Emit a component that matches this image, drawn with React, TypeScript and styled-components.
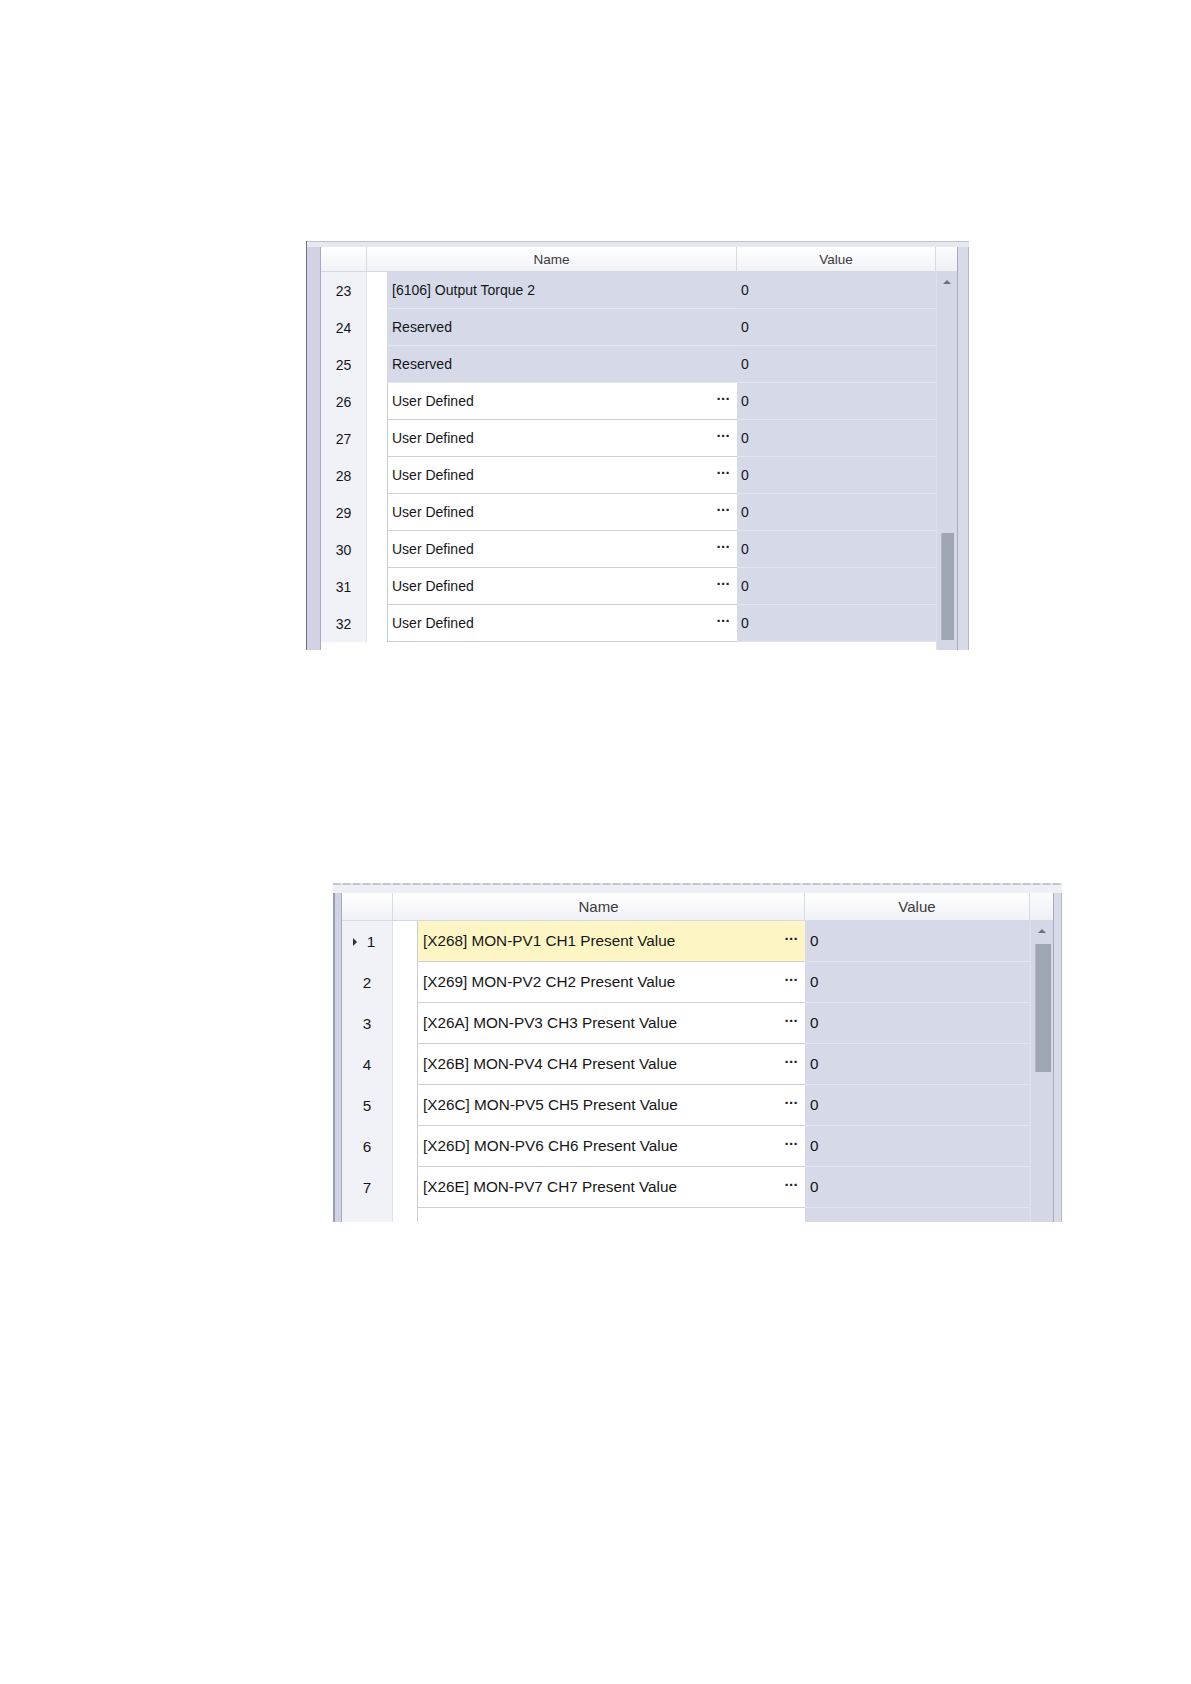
import styled, { createGlobalStyle } from 'styled-components';

type Dims = {
  width: number;
  height: number;
  topBar: number;
  edgeL: number;
  edgeR: number;
  rn: number;
  ind: number;
  name: number;
  value: number;
  scroll: number;
  header: number;
  row: number;
  font: number;
  hfont: number;
  namePad: number;
  valuePad: number;
  thumbTop: number;
  thumbH: number;
  thumbW: number;
  dashed: boolean;
};

type Tone = 'lavender' | 'white' | 'yellow';

interface RowData {
  no?: number;
  name: string;
  value: string;
  tone: Tone;
  editable: boolean;
  current?: boolean;
}

const GlobalStyle = createGlobalStyle`
  html, body {
    margin: 0;
    padding: 0;
    background: #fff;
  }
  body {
    font-family: "Liberation Sans", Arial, sans-serif;
    color: #161616;
  }
`;

const Page = styled.div`
  display: flex;
  flex-direction: column;
  align-items: flex-start;
  padding-top: 241px;
  min-height: 1684px;
  box-sizing: border-box;
`;

const PanelSlot = styled.div<{ $left: number; $top: number }>`
  margin-left: ${(p) => p.$left}px;
  margin-top: ${(p) => p.$top}px;
`;

const Frame = styled.div<{ $d: Dims }>`
  width: ${(p) => p.$d.width}px;
  height: ${(p) => p.$d.height}px;
  display: flex;
  flex-direction: column;
  overflow: hidden;
  background: #fff;
`;

const TopBar = styled.div<{ $d: Dims }>`
  height: ${(p) => p.$d.topBar}px;
  flex: none;
  box-sizing: border-box;
  background: ${(p) =>
    p.$d.dashed
      ? 'linear-gradient(#fff 0 1px, transparent 1px 3px, #eef0f6 3px), repeating-linear-gradient(90deg, #c3c5d0 0 7px, #dfe0e8 7px 10px)'
      : 'linear-gradient(#bfc2cf 0 1px, #e6e7ef 1px)'};
  ${(p) => (p.$d.dashed ? '' : 'border-left: 1px solid #6c6f82;')}
`;

const Body = styled.div`
  flex: 1;
  display: flex;
  min-height: 0;
`;

const LeftEdge = styled.div<{ $d: Dims }>`
  width: ${(p) => p.$d.edgeL}px;
  flex: none;
  box-sizing: border-box;
  background: #d1d3e4;
  border-left: ${(p) => (p.$d.dashed ? '2px solid #9a9db2' : '1px solid #6c6f82')};
  border-right: 1px solid #a7aabd;
`;

const RightEdge = styled.div<{ $d: Dims }>`
  width: ${(p) => p.$d.edgeR}px;
  flex: none;
  box-sizing: border-box;
  background: #d8dae8;
  border-left: 1px solid #a8abbd;
  box-shadow: inset -${(p) => Math.round(p.$d.edgeR / 2)}px 0 0 -${(p) =>
      Math.round(p.$d.edgeR / 2) - 1}px #b3b5c8;
`;

const Grid = styled.div<{ $d: Dims }>`
  width: ${(p) => p.$d.rn + p.$d.ind + p.$d.name + p.$d.value}px;
  flex: none;
  display: flex;
  flex-direction: column;
  background: #fff;
`;

const HeaderRow = styled.div<{ $d: Dims }>`
  height: ${(p) => p.$d.header}px;
  flex: none;
  display: grid;
  grid-template-columns: ${(p) => `${p.$d.rn}px ${p.$d.ind + p.$d.name}px ${p.$d.value}px`};
  background: linear-gradient(#ffffff, #f1f2f7);
  border-bottom: 1px solid #d6d8e2;
  box-sizing: border-box;
`;

const HeaderCell = styled.div<{ $d: Dims }>`
  display: flex;
  align-items: center;
  justify-content: center;
  border-right: 1px solid #d8dae3;
  font-size: ${(p) => p.$d.hfont}px;
  color: #3a3a3a;
`;

const Row = styled.div<{ $d: Dims }>`
  height: ${(p) => p.$d.row}px;
  flex: none;
  display: grid;
  grid-template-columns: ${(p) =>
    `${p.$d.rn}px ${p.$d.ind}px ${p.$d.name}px ${p.$d.value}px`};
`;

const RowNum = styled.div<{ $d: Dims; $current?: boolean }>`
  position: relative;
  display: flex;
  align-items: center;
  justify-content: center;
  padding-left: ${(p) => (p.$current ? 8 : 0)}px;
  background: #f1f2f8;
  border-right: 1px solid #e0e2ea;
  font-size: ${(p) => p.$d.font}px;
`;

const Pointer = styled.span`
  position: absolute;
  left: 11px;
  top: 50%;
  margin-top: -4px;
  width: 0;
  height: 0;
  border-top: 4px solid transparent;
  border-bottom: 4px solid transparent;
  border-left: 4px solid #333;
`;

const Indent = styled.div`
  background: #fff;
`;

const toneBg: Record<Tone, string> = {
  lavender: '#d5d9e8',
  white: '#ffffff',
  yellow: '#fdf6c4',
};

const NameCell = styled.div<{ $d: Dims; $tone: Tone }>`
  display: flex;
  align-items: center;
  justify-content: space-between;
  padding: 0 7px 0 ${(p) => p.$d.namePad}px;
  box-sizing: border-box;
  background: ${(p) => toneBg[p.$tone]};
  border-left: 1px solid ${(p) => (p.$tone === 'lavender' ? '#d5d9e8' : '#c9cbd3')};
  border-bottom: 1px solid ${(p) => (p.$tone === 'lavender' ? '#e4e6ef' : '#cfd0d6')};
  font-size: ${(p) => p.$d.font}px;
  white-space: nowrap;
`;

const Ellipsis = styled.span`
  font-size: 15px;
  font-weight: bold;
  letter-spacing: -0.5px;
  color: #222;
  margin-top: -5px;
`;

const ValueCell = styled.div<{ $d: Dims }>`
  display: flex;
  align-items: center;
  padding-left: ${(p) => p.$d.valuePad}px;
  background: #d5d9e8;
  border-bottom: 1px solid #e3e5ee;
  font-size: ${(p) => p.$d.font}px;
`;

const ScrollCol = styled.div<{ $d: Dims }>`
  width: ${(p) => p.$d.scroll}px;
  flex: none;
  display: flex;
  flex-direction: column;
`;

const ScrollHead = styled.div<{ $d: Dims }>`
  height: ${(p) => p.$d.header}px;
  flex: none;
  background: linear-gradient(#fbfbfd, #eef0f6);
  border-bottom: 1px solid #d6d8e2;
  box-sizing: border-box;
`;

const ScrollTrack = styled.div`
  position: relative;
  flex: 1;
  background: #d4d8e6;
  border-left: 1px solid #dfe1ea;
`;

const ArrowUp = styled.span`
  position: absolute;
  left: 50%;
  top: 8px;
  margin-left: -4px;
  width: 0;
  height: 0;
  border-left: 4px solid transparent;
  border-right: 4px solid transparent;
  border-bottom: 4px solid #6e7180;
`;

const Thumb = styled.span<{ $d: Dims }>`
  position: absolute;
  left: 4px;
  top: ${(p) => p.$d.thumbTop}px;
  width: ${(p) => p.$d.thumbW}px;
  height: ${(p) => p.$d.thumbH}px;
  background: #a0a5b4;
  border-left: 1px solid #b4b8c5;
`;

const GridPanel = ({ d, rows }: { d: Dims; rows: RowData[] }) => (
  <Frame $d={d}>
    <TopBar $d={d} />
    <Body>
      <LeftEdge $d={d} />
      <Grid $d={d}>
        <HeaderRow $d={d}>
          <HeaderCell $d={d} />
          <HeaderCell $d={d}>Name</HeaderCell>
          <HeaderCell $d={d}>Value</HeaderCell>
        </HeaderRow>
        {rows.map((row, i) => (
          <Row $d={d} key={i}>
            <RowNum $d={d} $current={row.current}>
              {row.current && <Pointer />}
              {row.no}
            </RowNum>
            <Indent />
            <NameCell $d={d} $tone={row.tone}>
              <span>{row.name}</span>
              {row.editable && <Ellipsis>···</Ellipsis>}
            </NameCell>
            <ValueCell $d={d}>{row.value}</ValueCell>
          </Row>
        ))}
      </Grid>
      <ScrollCol $d={d}>
        <ScrollHead $d={d} />
        <ScrollTrack>
          <ArrowUp />
          <Thumb $d={d} />
        </ScrollTrack>
      </ScrollCol>
      <RightEdge $d={d} />
    </Body>
  </Frame>
);

const firstDims: Dims = {
  width: 663,
  height: 409,
  topBar: 6,
  edgeL: 15,
  edgeR: 12,
  rn: 46,
  ind: 20,
  name: 350,
  value: 199,
  scroll: 21,
  header: 25,
  row: 37,
  font: 14,
  hfont: 13.5,
  namePad: 4,
  valuePad: 4,
  thumbTop: 261,
  thumbH: 107,
  thumbW: 12,
  dashed: false,
};

const secondDims: Dims = {
  width: 729,
  height: 340,
  topBar: 11,
  edgeL: 9,
  edgeR: 9,
  rn: 51,
  ind: 24,
  name: 388,
  value: 225,
  scroll: 23,
  header: 28,
  row: 41,
  font: 15.3,
  hfont: 15,
  namePad: 5,
  valuePad: 5,
  thumbTop: 23,
  thumbH: 128,
  thumbW: 15,
  dashed: true,
};

const firstRows: RowData[] = [
  { no: 23, name: '[6106] Output Torque 2', value: '0', tone: 'lavender', editable: false },
  { no: 24, name: 'Reserved', value: '0', tone: 'lavender', editable: false },
  { no: 25, name: 'Reserved', value: '0', tone: 'lavender', editable: false },
  ...[26, 27, 28, 29, 30, 31, 32].map((no) => ({
    no,
    name: 'User Defined',
    value: '0',
    tone: 'white' as Tone,
    editable: true,
  })),
];

const codes = ['X268', 'X269', 'X26A', 'X26B', 'X26C', 'X26D', 'X26E'];

const secondRows: RowData[] = [
  ...codes.map((code, i) => ({
    no: i + 1,
    name: `[${code}] MON-PV${i + 1} CH${i + 1} Present Value`,
    value: '0',
    tone: (i === 0 ? 'yellow' : 'white') as Tone,
    editable: true,
    current: i === 0,
  })),
  // next row is only partly scrolled into view
  { name: '', value: '', tone: 'white', editable: false },
];

const App = () => (
  <>
    <GlobalStyle />
    <Page>
      <PanelSlot $left={306} $top={0}>
        <GridPanel d={firstDims} rows={firstRows} />
      </PanelSlot>
      <PanelSlot $left={333} $top={232}>
        <GridPanel d={secondDims} rows={secondRows} />
      </PanelSlot>
    </Page>
  </>
);

export default App;
